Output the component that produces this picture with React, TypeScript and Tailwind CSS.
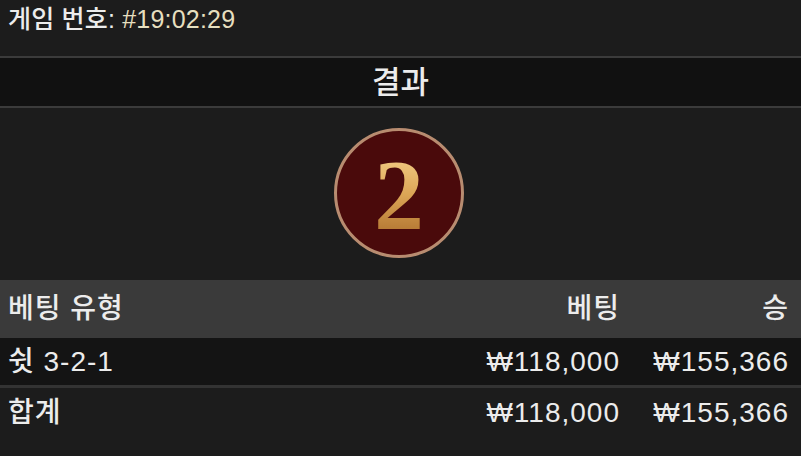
import React from 'react';

const rows = [
  { type: '쉿 3-2-1', bet: '₩118,000', win: '₩155,366' },
];

export default function App() {
  return (
    <div className="w-[801px] h-[456px] overflow-hidden bg-[#1c1c1c] text-[#ececec] font-medium font-['Liberation_Sans','Noto_Sans_CJK_KR',sans-serif]">
      {/* Game number */}
      <div className="h-[56px] px-2 pt-[1px] text-[25px] leading-[36px] tracking-[0.2px]">
        게임 번호: <span className="text-[#e6dfbf]">#19:02:29</span>
      </div>

      {/* Result title */}
      <div className="h-[52px] border-y-2 border-[#3b3b3b] bg-[#111111] flex items-center justify-center text-[31px] pt-[3px]">
        결과
      </div>

      {/* Result ball */}
      <div className="h-[172px] flex items-center justify-center pb-[2px] pr-[3px]">
        <div className="w-[130px] h-[130px] rounded-full border-[3px] border-[#b88c70] bg-[#4a0a0b] flex items-center justify-center">
          <span className="font-['Liberation_Serif',serif] font-bold text-[100px] leading-none mt-[4px] bg-gradient-to-b from-[#f8d690] via-[#dba555] to-[#a86a28] bg-clip-text text-transparent">
            2
          </span>
        </div>
      </div>

      {/* Bets table */}
      <div className="text-[28px] tracking-[1px]">
        <div className="h-[58px] bg-[#3a3a3a] flex items-center px-2">
          <div className="flex-1">베팅 유형</div>
          <div className="w-[160px] text-right">베팅</div>
          <div className="w-[173px] text-right pr-[4px]">승</div>
        </div>
        {rows.map((r) => (
          <div key={r.type} className="h-[50px] bg-[#141414] border-b-[3px] border-[#333333] flex items-center px-2">
            <div className="flex-1">{r.type}</div>
            <div className="w-[160px] text-right">{r.bet}</div>
            <div className="w-[173px] text-right pr-[4px]">{r.win}</div>
          </div>
        ))}
        <div className="h-[50px] flex items-center px-2">
          <div className="flex-1">합계</div>
          <div className="w-[160px] text-right">₩118,000</div>
          <div className="w-[173px] text-right pr-[4px]">₩155,366</div>
        </div>
      </div>
    </div>
  );
}
